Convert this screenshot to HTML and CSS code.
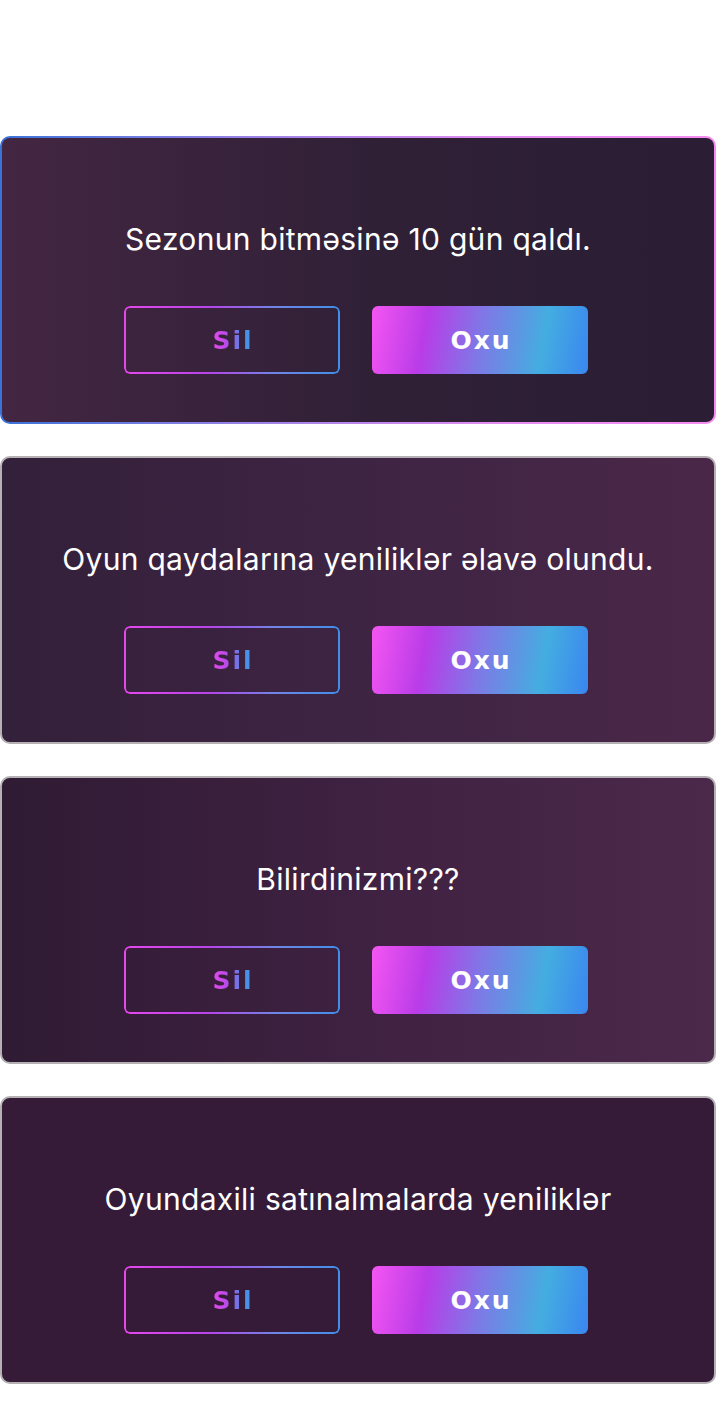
FILE: index.html
```html
<!DOCTYPE html>
<html lang="az">
<head>
<meta charset="utf-8">
<title>Bildirişlər</title>
<link rel="stylesheet" href="styles.css">
</head>
<body>
<main class="list">
  <section class="card card-active card-bg1">
    <p class="msg">Sezonun bitməsinə 10 gün qaldı.</p>
    <div class="actions">
      <button class="btn btn-outline"><span class="grad-text">Sil</span></button>
      <button class="btn btn-fill">Oxu</button>
    </div>
  </section>
  <section class="card card-bg2">
    <p class="msg">Oyun qaydalarına yeniliklər əlavə olundu.</p>
    <div class="actions">
      <button class="btn btn-outline"><span class="grad-text">Sil</span></button>
      <button class="btn btn-fill">Oxu</button>
    </div>
  </section>
  <section class="card card-bg3">
    <p class="msg">Bilirdinizmi???</p>
    <div class="actions">
      <button class="btn btn-outline"><span class="grad-text">Sil</span></button>
      <button class="btn btn-fill">Oxu</button>
    </div>
  </section>
  <section class="card card-bg4">
    <p class="msg">Oyundaxili satınalmalarda yeniliklər</p>
    <div class="actions">
      <button class="btn btn-outline"><span class="grad-text">Sil</span></button>
      <button class="btn btn-fill">Oxu</button>
    </div>
  </section>
</main>
</body>
</html>
```

FILE: styles.css
```css
* { box-sizing: border-box; }
html, body { margin: 0; padding: 0; background: #ffffff; }
body { font-family: Inter, "Noto Sans", sans-serif; }

.list {
  display: flex;
  flex-direction: column;
  gap: 32px;
  padding-top: 136px;
}

.card {
  height: 288px;
  border-radius: 10px;
  border: 2px solid #b4b0b4;
  display: flex;
  flex-direction: column;
  align-items: center;
  padding-top: 83px;
  gap: 49px;
}

.card-bg1 {
  border-color: transparent;
  background:
    linear-gradient(90deg, #432642 0%, #2f2036 55%, #2a1d34 100%) padding-box,
    linear-gradient(90deg, #3a72d8 0%, #9a82e6 35%, #e48cf0 70%, #f68cf2 100%) border-box;
}
.card-bg2 { background: linear-gradient(90deg, #33203a 0%, #3e2443 50%, #4a2748 100%); }
.card-bg3 { background: linear-gradient(90deg, #2f1b34 0%, #3f2141 50%, #4b294b 100%); }
.card-bg4 { background: linear-gradient(90deg, #351b37 0%, #361b38 100%); }

.msg {
  margin: 0;
  color: #ffffff;
  font-size: 30px;
  line-height: 36px;
  font-weight: 400;
  letter-spacing: 0.3px;
}

.actions {
  display: flex;
  gap: 32px;
  margin-right: 4px;
}

.btn {
  position: relative;
  width: 216px;
  height: 68px;
  border-radius: 6px;
  font-family: "DejaVu Sans", sans-serif;
  font-weight: 700;
  font-size: 25px;
  letter-spacing: 2px;
  display: flex;
  align-items: center;
  justify-content: center;
  cursor: pointer;
  padding: 0 0 0 2px;
}

.btn-outline {
  border: none;
  background: transparent;
}
.btn-outline::before {
  content: "";
  position: absolute;
  inset: 0;
  border-radius: 6px;
  padding: 2px;
  background: linear-gradient(90deg, #e846ee 0%, #b545ea 40%, #6f86e6 70%, #3f8fe8 100%);
  -webkit-mask: linear-gradient(#000 0 0) content-box, linear-gradient(#000 0 0);
  -webkit-mask-composite: xor;
  mask: linear-gradient(#000 0 0) content-box exclude, linear-gradient(#000 0 0);
}

.grad-text {
  background: linear-gradient(90deg, #e848ec 0%, #b04ce8 40%, #4b90e6 75%, #4394ea 100%);
  -webkit-background-clip: text;
  background-clip: text;
  color: transparent;
}

.btn-fill {
  border: none;
  color: #ffffff;
  background: linear-gradient(100deg, #f556f2 0%, #b93ce8 25%, #7f78e6 50%, #44ade0 78%, #3a86f0 100%);
}
```
